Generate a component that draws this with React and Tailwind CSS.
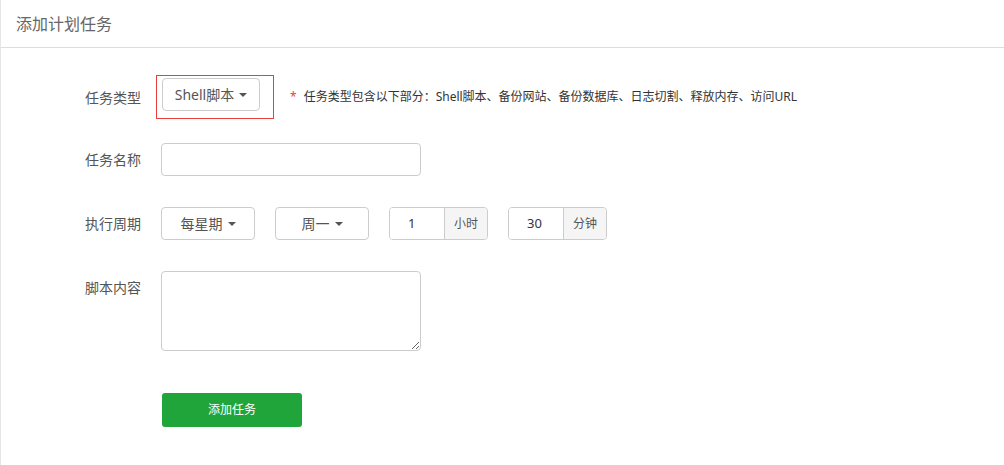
import React from 'react';

const Caret = () => (
    <span className="inline-block ml-[5px] w-0 h-0 border-l-[4px] border-r-[4px] border-t-[4px] border-l-transparent border-r-transparent border-t-[#555]" />
);

const DropBtn = ({ label, width }) => (
    <button className={`${width} h-[33px] flex items-center justify-center bg-white border border-[#ccc] rounded-[4px] text-[14px] text-[#555]`}>
        <span>{label}</span>
        <Caret />
    </button>
);

const UnitInput = ({ value, unit }) => (
    <div className="flex h-[33px] w-[99px] border border-[#ccc] rounded-[4px] overflow-hidden">
        <input
            type="text"
            defaultValue={value}
            className="w-[54px] px-[18px] text-[13px] text-[#333] outline-none bg-white"
        />
        <span className="flex-1 flex items-center justify-center bg-[#f5f5f5] border-l border-[#ccc] text-[12px] text-[#555]">
            {unit}
        </span>
    </div>
);

const App = () => {
    return (
        <div className="h-[465px] bg-white border-l border-[#e4e6ea] font-['Noto_Sans','Noto_Sans_CJK_SC',sans-serif]">
            {/* Header */}
            <div className="h-[48px] border-b border-[#ddd] flex items-center pl-[15px]">
                <h2 className="text-[16px] text-[#666]">添加计划任务</h2>
            </div>

            {/* Form */}
            <div className="pl-[84px] pt-[27px]">
                <div className="flex items-center">
                    <label className="w-[71px] text-[14px] text-[#555]">任务类型</label>
                    <div className="border border-[#e8403c] pl-[5px] pt-[2px] pr-[13px] pb-[7px]">
                        <DropBtn label="Shell脚本" width="w-[98px]" />
                    </div>
                    <span className="ml-[16px] text-[12px] text-[#333]">
                        <span className="text-[#e8403c] mr-[7px]">*</span>
                        任务类型包含以下部分：Shell脚本、备份网站、备份数据库、日志切割、释放内存、访问URL
                    </span>
                </div>

                <div className="flex items-center mt-[24px]">
                    <label className="w-[76px] text-[14px] text-[#555]">任务名称</label>
                    <input
                        type="text"
                        className="w-[260px] h-[33px] border border-[#ccc] rounded-[4px] px-3 text-[13px] outline-none"
                    />
                </div>

                <div className="flex items-center mt-[31px]">
                    <label className="w-[76px] text-[14px] text-[#555]">执行周期</label>
                    <div className="flex items-center gap-[20px]">
                        <DropBtn label="每星期" width="w-[94px]" />
                        <DropBtn label="周一" width="w-[94px]" />
                        <UnitInput value="1" unit="小时" />
                        <UnitInput value="30" unit="分钟" />
                    </div>
                </div>

                <div className="flex items-start mt-[31px]">
                    <label className="w-[76px] text-[14px] text-[#555] leading-[34px]">脚本内容</label>
                    <textarea className="w-[260px] h-[80px] border border-[#ccc] rounded-[4px] px-3 py-2 text-[13px] outline-none" />
                </div>

                <div className="mt-[42px] pl-[77px]">
                    <button className="w-[140px] h-[34px] bg-[#20a53a] rounded-[3px] text-white text-[12px]">
                        添加任务
                    </button>
                </div>
            </div>
        </div>
    );
};

export default App;
